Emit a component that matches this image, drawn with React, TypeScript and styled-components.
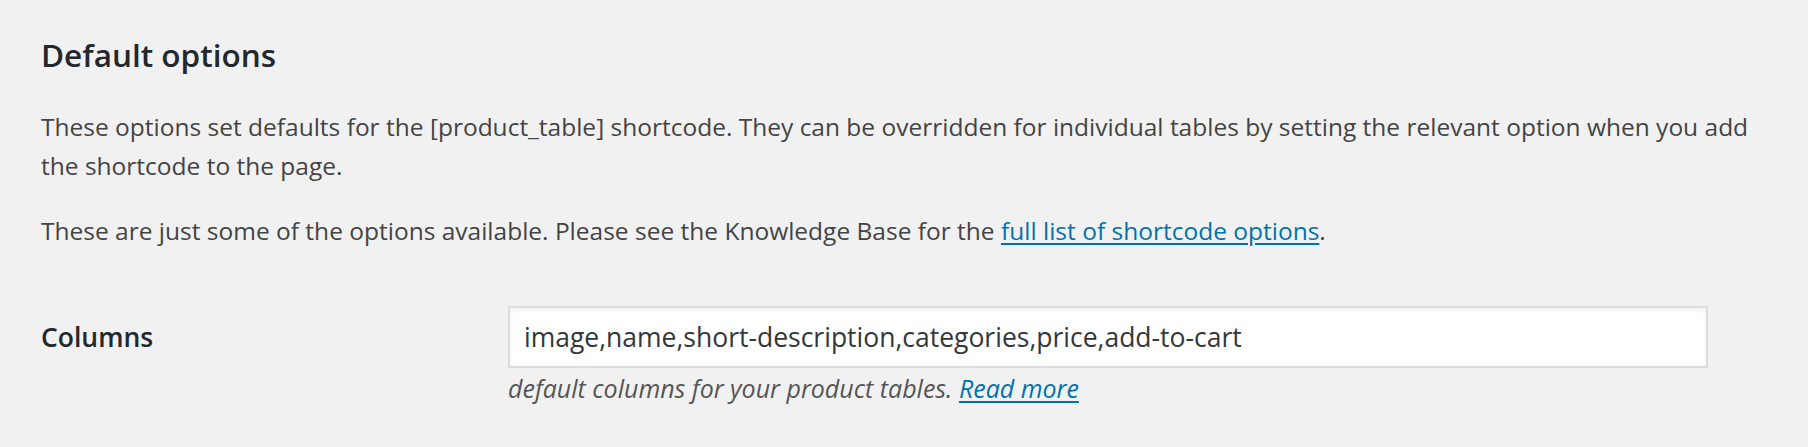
import styled, { createGlobalStyle } from "styled-components";

const GlobalStyle = createGlobalStyle`
  html, body {
    margin: 0;
    padding: 0;
    background: #f1f1f1;
  }
  body {
    font-family: "Open Sans", "Noto Sans", sans-serif;
    color: #444;
  }
`;

const Wrap = styled.div`
  padding: 35px 27px 0 41px;
  width: 1740px;
`;

const Title = styled.h2`
  margin: 0;
  font-size: 31.5px;
  line-height: 40px;
  font-weight: 600;
  color: #23282d;
`;

const Text = styled.p<{ $gap: number }>`
  margin: ${(p) => p.$gap}px 0 0 0;
  font-size: 24.5px;
  line-height: 39px;
  color: #444;
`;

const Link = styled.a`
  color: #0073aa;
  text-decoration: underline;
  text-underline-offset: 3px;
  cursor: pointer;
`;

const Row = styled.div`
  display: grid;
  grid-template-columns: 467px 1200px;
  margin-top: 56px;
`;

const Label = styled.div`
  height: 62px;
  display: flex;
  align-items: center;
  font-size: 26.5px;
  font-weight: 600;
  color: #23282d;
`;

const Field = styled.div`
  display: flex;
  flex-direction: column;
`;

const Input = styled.input`
  box-sizing: border-box;
  width: 1200px;
  height: 62px;
  padding: 0 14px;
  border: 2px solid #ddd;
  box-shadow: inset 0 2px 4px rgba(0, 0, 0, 0.07);
  background: #fff;
  font-family: "Open Sans", "Noto Sans", sans-serif;
  font-size: 26.5px;
  color: #32373c;
  outline: none;
`;

const Hint = styled.p`
  margin: 1px 0 0 0;
  font-size: 25px;
  line-height: 39px;
  font-style: italic;
  color: #555;
`;

export default function App() {
  return (
    <>
      <GlobalStyle />
      <Wrap>
        <Title>Default options</Title>
        <Text $gap={32}>
          These options set defaults for the [product_table] shortcode. They can be overridden for individual
          tables by setting the relevant option when you add the shortcode to the page.
        </Text>
        <Text $gap={26}>
          These are just some of the options available. Please see the Knowledge Base for the{" "}
          <Link>full list of shortcode options</Link>.
        </Text>
        <Row>
          <Label>Columns</Label>
          <Field>
            <Input readOnly value="image,name,short-description,categories,price,add-to-cart" />
            <Hint>
              default columns for your product tables. <Link>Read more</Link>
            </Hint>
          </Field>
        </Row>
      </Wrap>
    </>
  );
}
